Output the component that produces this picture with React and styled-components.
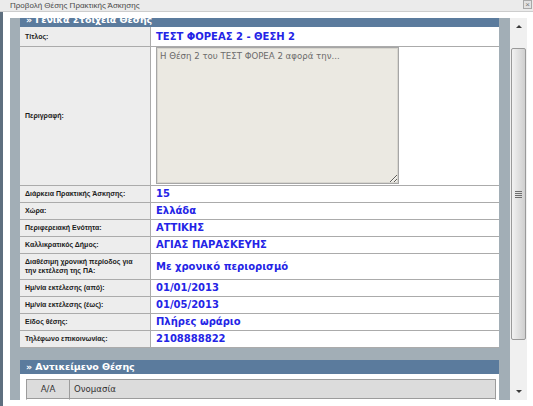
import React, { useLayoutEffect, useRef } from 'react';
import styled, { createGlobalStyle } from 'styled-components';

const GlobalStyle = createGlobalStyle`
  html, body { margin: 0; padding: 0; background: #fff; }
  body {
    width: 533px;
    height: 406px;
    overflow: hidden;
    font-family: "Liberation Sans", Arial, sans-serif;
  }
`;

const Window = styled.div`
  width: 533px;
  height: 406px;
  display: flex;
  flex-direction: column;
  background: #fff;
`;

const TitleBar = styled.div`
  flex: none;
  height: 11px;
  display: flex;
  justify-content: space-between;
  background: #ebebeb;
  border-bottom: 1px solid #cdcdcd;
  padding-left: 10px;
`;

const Title = styled.span`
  font-size: 8px;
  line-height: 11px;
  color: #4a4a4a;
`;

const CloseBtn = styled.div`
  width: 7px;
  height: 7px;
  margin: 0 1px 0 0;
  border: 1px solid #a8a8a8;
  background: #e2e2e2;
  color: #7a7a7a;
  font-size: 8px;
  line-height: 7px;
  text-align: center;
`;

const Body = styled.div`
  flex: 1;
  min-height: 0;
  display: flex;
  border-left: 3px solid #5e6f7f;
  padding: 6px 6px 6px 7px;
`;

const Viewport = styled.div`
  flex: 1;
  overflow: hidden;
  background: #a2aeb6;
`;

const Content = styled.div`
  padding: 13px 11px 40px 10px;
`;

const Section = styled.div`
  margin-bottom: ${p => p.$gap || 0}px;
`;

const SectionHead = styled.div`
  height: 14px;
  line-height: 13px;
  padding-left: 6px;
  background: #5b7b9d;
  color: #fff;
  font-weight: bold;
  font-size: 9.5px;
  font-family: "DejaVu Sans", Verdana, sans-serif;
  letter-spacing: -0.1px;
`;

const InfoTable = styled.table`
  width: 100%;
  border-collapse: collapse;
  background: #fff;
`;

const Row = styled.tr`
  height: ${p => p.$h}px;
  border-bottom: 1px solid #ababab;
`;

const Label = styled.td`
  width: 120px;
  padding: 0 5px;
  background: #ededed;
  border-right: 1px solid #ababab;
  color: #1c1c1c;
  font-weight: bold;
  font-size: 7px;
  line-height: 9px;
  vertical-align: middle;
`;

const Value = styled.td`
  padding: 0 5px;
  color: #2424e6;
  font-family: "DejaVu Sans", Verdana, sans-serif;
  font-weight: bold;
  font-size: 10px;
  vertical-align: middle;
  white-space: nowrap;
`;

const Description = styled.textarea`
  display: block;
  box-sizing: border-box;
  width: 243px;
  height: 137px;
  margin: 0;
  padding: 3px 3px;
  background: #ebe9e2;
  border: 1px solid #a6a6a6;
  outline: 1px solid #d8d6cf;
  outline-offset: -2px;
  color: #6b6b6b;
  font-family: "DejaVu Sans", Verdana, sans-serif;
  font-size: 8.6px;
  resize: both;
`;

const WhiteBox = styled.div`
  background: #fff;
  padding: 5px 3px 10px 6px;
`;

const ListTable = styled.table`
  width: 100%;
  border-collapse: collapse;
  border: 1px solid #9c9c9c;
  font-family: "DejaVu Sans", Verdana, sans-serif;
  font-size: 8.6px;
  color: #333;
`;

const ListHead = styled.th`
  height: 18px;
  background: #dcdcdc;
  border: 1px solid #9c9c9c;
  font-weight: normal;
  text-align: ${p => (p.$center ? 'center' : 'left')};
  padding: 0 4px;
  width: ${p => (p.$w ? p.$w + 'px' : 'auto')};
`;

const ListCell = styled.td`
  height: 17px;
  border: 1px solid #c4c4c4;
  text-align: ${p => (p.$center ? 'center' : 'left')};
  padding: 0 4px;
`;

const ScrollBar = styled.div`
  flex: none;
  width: 17px;
  display: flex;
  flex-direction: column;
  background: #f0f0f0;
`;

const ArrowBtn = styled.div`
  flex: none;
  height: 17px;
  display: flex;
  align-items: center;
  justify-content: center;
  &::before {
    content: '';
    width: 0;
    height: 0;
    border-left: 3px solid transparent;
    border-right: 3px solid transparent;
    ${p => (p.$down ? 'border-top: 3px solid #3a3a3a;' : 'border-bottom: 3px solid #3a3a3a;')}
  }
`;

const Track = styled.div`
  flex: 1;
  padding: 13px 1px 0;
`;

const Thumb = styled.div`
  height: 292px;
  box-sizing: border-box;
  border: 1px solid #9a9a9a;
  border-radius: 2px;
  background: linear-gradient(to right, #f2f2f2 0%, #e2e2e2 45%, #cfcfcf 100%);
  display: flex;
  align-items: center;
  justify-content: center;
`;

const Grip = styled.div`
  width: 7px;
  height: 7px;
  background: repeating-linear-gradient(to bottom, #6e6e6e 0 1px, transparent 1px 2px);
`;

const rows = [
  ['Διάρκεια Πρακτικής Άσκησης:', '15', 17],
  ['Χώρα:', 'Ελλάδα', 17],
  ['Περιφερειακή Ενότητα:', 'ΑΤΤΙΚΗΣ', 17],
  ['Καλλικρατικός Δήμος:', 'ΑΓΙΑΣ ΠΑΡΑΣΚΕΥΗΣ', 17],
  ['Διαθέσιμη χρονική περίοδος για την εκτέλεση της ΠΑ:', 'Με χρονικό περιορισμό', 26],
  ['Ημ/νία εκτέλεσης (από):', '01/01/2013', 17],
  ['Ημ/νία εκτέλεσης (έως):', '01/05/2013', 17],
  ['Είδος θέσης:', 'Πλήρες ωράριο', 17],
  ['Τηλέφωνο επικοινωνίας:', '2108888822', 17],
];

export default function App() {
  const viewRef = useRef(null);

  useLayoutEffect(() => {
    if (viewRef.current) viewRef.current.scrollTop = 18;
  }, []);

  return (
    <>
      <GlobalStyle />
      <Window>
        <TitleBar>
          <Title>Προβολή Θέσης Πρακτικής Άσκησης</Title>
          <CloseBtn>×</CloseBtn>
        </TitleBar>
        <Body>
          <Viewport ref={viewRef}>
            <Content>
              <Section $gap={12}>
                <SectionHead>» Γενικά Στοιχεία Θέσης</SectionHead>
                <InfoTable>
                  <tbody>
                    <Row $h={19}>
                      <Label>Τίτλος:</Label>
                      <Value>ΤΕΣΤ ΦΟΡΕΑΣ 2 - ΘΕΣΗ 2</Value>
                    </Row>
                    <Row $h={139}>
                      <Label>Περιγραφή:</Label>
                      <Value>
                        <Description readOnly defaultValue="Η Θέση 2 του ΤΕΣΤ ΦΟΡΕΑ 2 αφορά την..." />
                      </Value>
                    </Row>
                    {rows.map(([label, value, h]) => (
                      <Row key={label} $h={h}>
                        <Label>{label}</Label>
                        <Value>{value}</Value>
                      </Row>
                    ))}
                  </tbody>
                </InfoTable>
              </Section>
              <Section>
                <SectionHead>» Αντικείμενο Θέσης</SectionHead>
                <WhiteBox>
                  <ListTable>
                    <thead>
                      <tr>
                        <ListHead $center $w={34}>Α/Α</ListHead>
                        <ListHead>Ονομασία</ListHead>
                      </tr>
                    </thead>
                    <tbody>
                      <tr>
                        <ListCell $center>1</ListCell>
                        <ListCell>Ερευνητική εργασία</ListCell>
                      </tr>
                    </tbody>
                  </ListTable>
                </WhiteBox>
              </Section>
            </Content>
          </Viewport>
          <ScrollBar>
            <ArrowBtn />
            <Track>
              <Thumb>
                <Grip />
              </Thumb>
            </Track>
            <ArrowBtn $down />
          </ScrollBar>
        </Body>
      </Window>
    </>
  );
}
